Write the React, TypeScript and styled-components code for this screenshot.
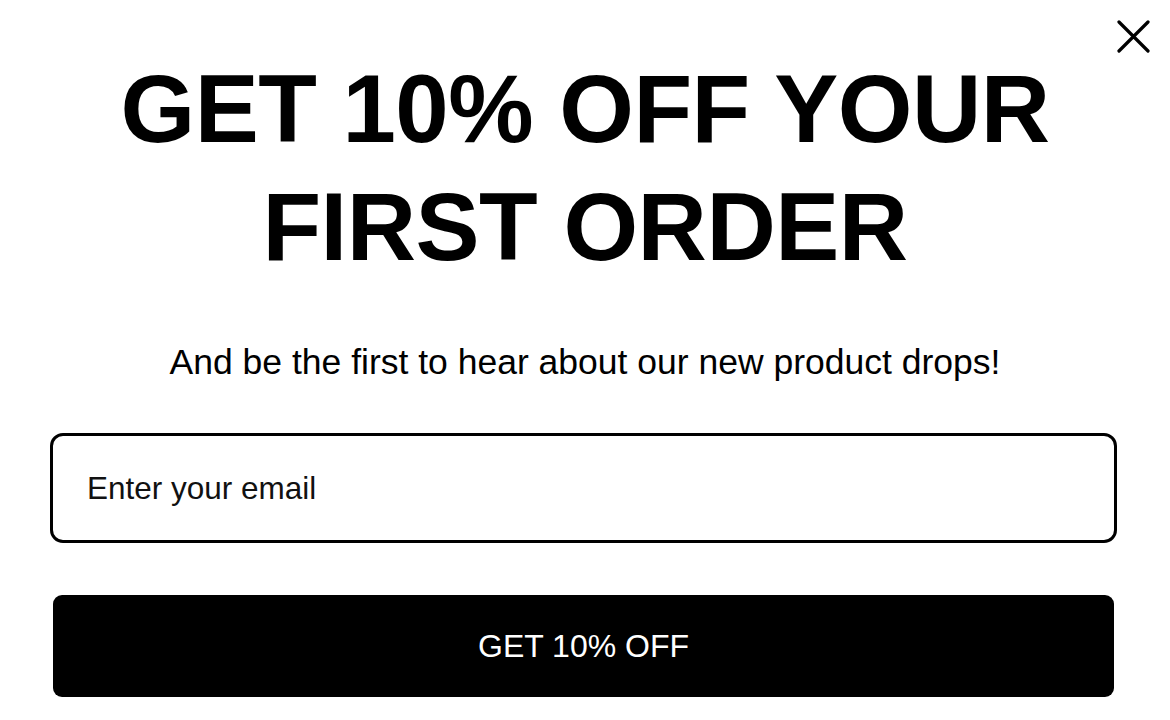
import React from "react";
import styled, { createGlobalStyle } from "styled-components";

const Global = createGlobalStyle`
  html, body { margin: 0; padding: 0; background: #fff; }
  body { font-family: "Liberation Sans", Arial, sans-serif; color: #000; }
  * { box-sizing: border-box; }
`;

const Page = styled.div`
  position: relative;
  width: 1170px;
  height: 720px;
  overflow: hidden;
  background: #fff;
  display: flex;
  flex-direction: column;
  align-items: center;
  padding-top: 50px;
`;

const Close = styled.button`
  position: absolute;
  top: 20px;
  left: 1117px;
  width: 33px;
  height: 33px;
  padding: 0;
  border: none;
  background: transparent;
  display: flex;
  cursor: pointer;
`;

const Title = styled.h1`
  margin: 0;
  font-family: "Liberation Sans", Arial, sans-serif;
  font-weight: 700;
  font-size: 96px;
  line-height: 118px;
  text-align: center;
  letter-spacing: -0.5px;
`;

const Subtitle = styled.p`
  margin: 56px 0 0;
  font-size: 35.5px;
  line-height: 40px;
  text-align: center;
  white-space: nowrap;
`;

const EmailInput = styled.input`
  margin-top: 51px;
  width: 1067px;
  height: 110px;
  align-self: flex-start;
  margin-left: 50px;
  border: 3px solid #000;
  border-radius: 13px;
  padding: 0 0 0 34px;
  font-family: "Liberation Sans", Arial, sans-serif;
  font-size: 31.5px;
  color: #000;
  outline: none;
  background: #fff;
  &::placeholder { color: #111; opacity: 1; }
`;

const Submit = styled.button`
  margin-top: 52px;
  width: 1061px;
  height: 102px;
  align-self: flex-start;
  margin-left: 53px;
  border: none;
  border-radius: 9px;
  background: #000;
  color: #fff;
  font-family: "Liberation Sans", Arial, sans-serif;
  font-size: 32px;
  cursor: pointer;
`;

export default function App() {
  return (
    <>
      <Global />
      <Page>
        <Close aria-label="Close">
          <svg width="33" height="33" viewBox="0 0 33 33">
            <path d="M2 2 L31 31 M31 2 L2 31" stroke="#000" strokeWidth="3.2" strokeLinecap="round" />
          </svg>
        </Close>
        <Title>
          GET 10% OFF YOUR
          <br />
          FIRST ORDER
        </Title>
        <Subtitle>And be the first to hear about our new product drops!</Subtitle>
        <EmailInput type="email" placeholder="Enter your email" />
        <Submit>GET 10% OFF</Submit>
      </Page>
    </>
  );
}
